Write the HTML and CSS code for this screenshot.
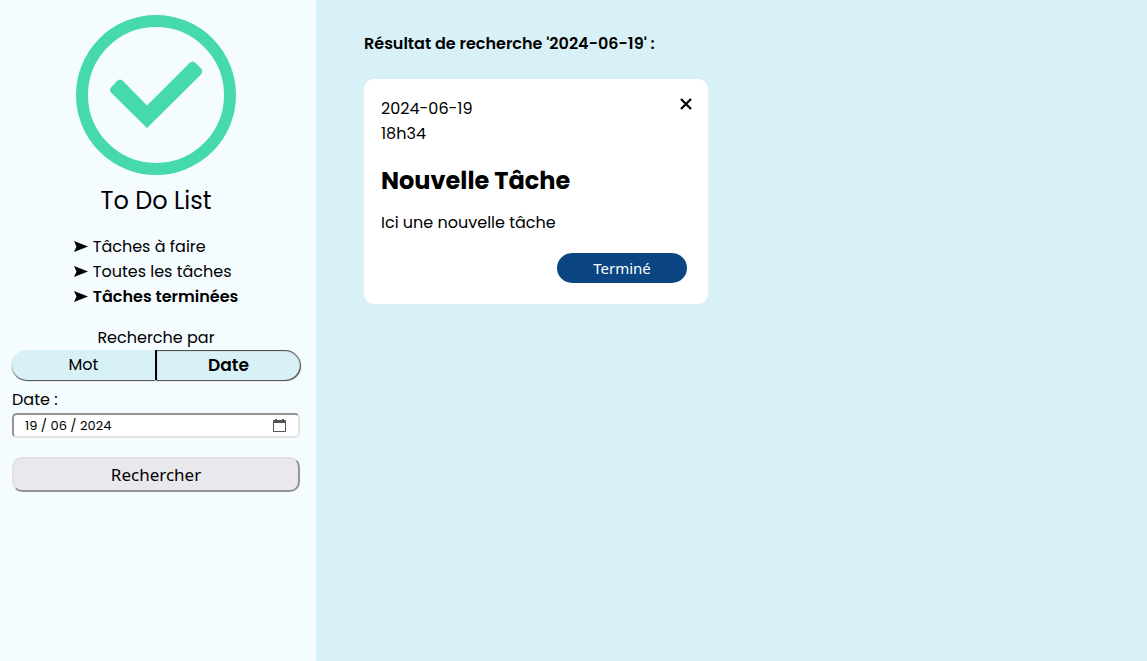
FILE: index.html
```html
<!DOCTYPE html>
<html lang="fr">
<head>
<meta charset="utf-8">
<title>To Do List</title>
<link rel="stylesheet" href="styles.css">
</head>
<body>
<aside class="sidebar">
  <header class="brand">
    <svg class="logo" viewBox="0 0 160 160" aria-hidden="true">
      <circle cx="80" cy="80" r="74" fill="none" stroke="#46d9ab" stroke-width="12"/>
      <path fill="#46d9ab" d="M35 77.500Q33 75 35 72.500L41 66Q44 63 47 66L71 90.500L113.500 48Q116.500 45 119.500 48L125 53.500Q127.500 56.500 125 59.500L71 113Z"/>
    </svg>
    <h1 class="title">To Do List</h1>
  </header>
  <nav class="menu">
    <a class="menu-link" href="#todo"><svg class="arrow" viewBox="0 0 14 11" aria-hidden="true"><path d="M0 0L14 5.500L0 11L2.500 5.500Z"/></svg>Tâches à faire</a>
    <a class="menu-link" href="#all"><svg class="arrow" viewBox="0 0 14 11" aria-hidden="true"><path d="M0 0L14 5.500L0 11L2.500 5.500Z"/></svg>Toutes les tâches</a>
    <a class="menu-link active" href="#done"><svg class="arrow" viewBox="0 0 14 11" aria-hidden="true"><path d="M0 0L14 5.500L0 11L2.500 5.500Z"/></svg>Tâches terminées</a>
  </nav>
  <form class="search">
    <p class="search-title">Recherche par</p>
    <div class="modes">
      <button class="mode mode-word" type="button">Mot</button>
      <button class="mode mode-date" type="button" aria-pressed="true">Date</button>
    </div>
    <label class="label" for="date">Date :</label>
    <div class="field">
      <input class="date" id="date" type="text" value="19 / 06 / 2024">
      <button class="picker" type="button" aria-label="Choisir une date"><svg class="calendar" viewBox="0 0 13 13" aria-hidden="true"><path fill="#555" fill-rule="evenodd" d="M2 0H4V1H9V0H11V1H12Q13 1 13 2V12Q13 13 12 13H1Q0 13 0 12V2Q0 1 1 1H2ZM1 4V12H12V4Z"/></svg></button>
    </div>
    <button class="submit" type="submit">Rechercher</button>
  </form>
</aside>
<main class="content">
  <h2 class="result">Résultat de recherche '2024-06-19' :</h2>
  <article class="card">
    <div class="card-top">
      <p class="when"><span>2024-06-19</span><span>18h34</span></p>
      <button class="close" type="button" aria-label="Supprimer"><svg class="cross" viewBox="0 0 12 12" aria-hidden="true"><path d="M1 1L11 11M11 1L1 11" stroke="#000" stroke-width="2.300"/></svg></button>
    </div>
    <h3 class="task">Nouvelle Tâche</h3>
    <p class="text">Ici une nouvelle tâche</p>
    <button class="done" type="button">Terminé</button>
  </article>
</main>
</body>
</html>
```
FILE: styles.css
```css
* {
  box-sizing: border-box;
}

body {
  display: flex;
  min-height: 100vh;
  margin: 0;
  background: #d8f1f7;
  color: #000;
  font: 16px/25px Poppins, Inter, sans-serif;
}

h1, h2, h3, p {
  margin: 0;
}

button, input {
  font-family: inherit;
  color: #000;
}

button {
  cursor: pointer;
}

.sidebar {
  flex: 0 0 316px;
  display: flex;
  flex-direction: column;
  gap: 16px;
  padding: 15px 16px 16px 12px;
  background: #f4fcff;
}

.brand {
  display: flex;
  flex-direction: column;
  align-items: center;
  gap: 8px;
}

.logo {
  width: 160px;
  height: 160px;
}

.title {
  font-size: 24px;
  line-height: 35px;
  font-weight: 400;
}

.menu {
  align-self: center;
  display: flex;
  flex-direction: column;
}

.menu-link {
  display: flex;
  align-items: center;
  gap: 5px;
  color: #000;
  text-decoration: none;
}

.arrow {
  width: 14px;
  height: 11px;
}

.active {
  font-weight: 600;
}

.search {
  display: flex;
  flex-direction: column;
}

.search-title {
  text-align: center;
}

.modes {
  display: flex;
  height: 30px;
}

.mode {
  flex: 1;
  min-width: 0;
  padding: 0 0 2px;
  border: 0;
  background: #d8f1f7;
  font-size: 16px;
}

.mode-word {
  border-radius: 15px 0 0 15px;
  box-shadow: 0 1px 1px #444;
}

.mode-date {
  padding-bottom: 0;
  border-left: 2px solid #000;
  border-radius: 0 15px 15px 0;
  box-shadow: inset 0 1px 1px #444, 1px 1px 1px #444;
  font-size: 17px;
  font-weight: 600;
}

.label {
  margin-top: 7px;
}

.field {
  display: flex;
  align-items: center;
  height: 25px;
  margin-top: 1px;
  padding: 0 12px 0 11px;
  border: 2px solid;
  border-color: #949494 #e2e2e2 #e2e2e2 #949494;
  border-radius: 5px;
  background: #fff;
}

.date {
  flex: 1;
  width: 100%;
  min-width: 0;
  padding: 0;
  border: 0;
  background: none;
  font-size: 13px;
}

.picker {
  display: flex;
  padding: 0;
  border: 0;
  background: none;
}

.calendar {
  width: 13px;
  height: 13px;
}

.submit {
  height: 35px;
  margin-top: 19px;
  padding: 0;
  border: 2px solid;
  border-color: #e2e2e2 #949494 #949494 #e2e2e2;
  border-radius: 10px;
  background: #e9e8ed;
  font: 17px "Noto Sans", sans-serif;
}

.content {
  flex: 1;
  min-width: 0;
  padding: 31px 48px;
}

.result {
  font-size: 16px;
  font-weight: 600;
}

.card {
  display: flex;
  flex-direction: column;
  width: 344px;
  max-width: 100%;
  margin-top: 23px;
  padding: 17px 21px 21px 17px;
  border-radius: 10px;
  background: #fff;
}

.card-top {
  display: flex;
  justify-content: space-between;
  align-items: flex-start;
}

.when {
  display: flex;
  flex-direction: column;
}

.close {
  display: flex;
  margin: 2px -5px 0 0;
  padding: 0;
  border: 0;
  background: none;
}

.cross {
  width: 12px;
  height: 12px;
}

.task {
  margin-top: 17px;
  font-size: 24px;
  line-height: 36px;
  font-weight: 700;
}

.text {
  margin-top: 11px;
}

.done {
  align-self: flex-end;
  width: 130px;
  height: 30px;
  margin-top: 18px;
  padding: 0;
  border: 0;
  border-radius: 15px;
  background: #0b4582;
  color: #fff;
  font: 15px "Noto Sans", sans-serif;
}
```
